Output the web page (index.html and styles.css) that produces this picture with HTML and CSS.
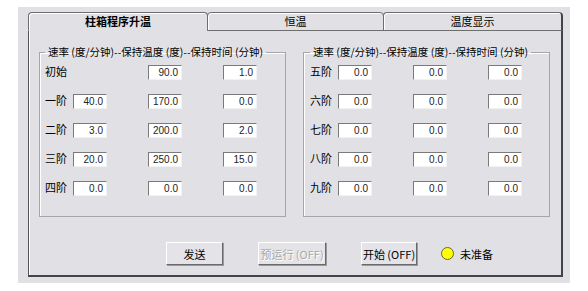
FILE: index.html
```html
<!DOCTYPE html>
<html>
<head>
    <title>柱箱程序升温</title>
    <link rel="stylesheet" href="styles.css">
</head>

<body>
    <div class="window">
        <div class="tabs">
            <div class="tab active">柱箱程序升温</div>
            <div class="tab">恒温</div>
            <div class="tab last">温度显示</div>
        </div>
        <div class="panel">
            <div class="groups">
                <fieldset class="group">
                    <legend>速率 (度/分钟)--保持温度 (度)--保持时间 (分钟)</legend>
                    <div class="rows">
                        <span class="label">初始</span><span></span>
                        <input type="text" class="num" value="90.0">
                        <input type="text" class="num" value="1.0">

                        <span class="label">一阶</span>
                        <input type="text" class="num" value="40.0">
                        <input type="text" class="num" value="170.0">
                        <input type="text" class="num" value="0.0">

                        <span class="label">二阶</span>
                        <input type="text" class="num" value="3.0">
                        <input type="text" class="num" value="200.0">
                        <input type="text" class="num" value="2.0">

                        <span class="label">三阶</span>
                        <input type="text" class="num" value="20.0">
                        <input type="text" class="num" value="250.0">
                        <input type="text" class="num" value="15.0">

                        <span class="label">四阶</span>
                        <input type="text" class="num" value="0.0">
                        <input type="text" class="num" value="0.0">
                        <input type="text" class="num" value="0.0">
                    </div>
                </fieldset>
                <fieldset class="group">
                    <legend>速率 (度/分钟)--保持温度 (度)--保持时间 (分钟)</legend>
                    <div class="rows">
                        <span class="label">五阶</span>
                        <input type="text" class="num" value="0.0">
                        <input type="text" class="num" value="0.0">
                        <input type="text" class="num" value="0.0">

                        <span class="label">六阶</span>
                        <input type="text" class="num" value="0.0">
                        <input type="text" class="num" value="0.0">
                        <input type="text" class="num" value="0.0">

                        <span class="label">七阶</span>
                        <input type="text" class="num" value="0.0">
                        <input type="text" class="num" value="0.0">
                        <input type="text" class="num" value="0.0">

                        <span class="label">八阶</span>
                        <input type="text" class="num" value="0.0">
                        <input type="text" class="num" value="0.0">
                        <input type="text" class="num" value="0.0">

                        <span class="label">九阶</span>
                        <input type="text" class="num" value="0.0">
                        <input type="text" class="num" value="0.0">
                        <input type="text" class="num" value="0.0">
                    </div>
                </fieldset>
            </div>
            <div class="actions">
                <button type="button" class="btn send">发送</button>
                <button type="button" class="btn pre" disabled>预运行 (OFF)</button>
                <button type="button" class="btn start">开始 (OFF)</button>
                <span class="lamp"></span>
                <span class="status">未准备</span>
            </div>
        </div>
    </div>
</body>
</html>
```

FILE: styles.css
```css
body {
    margin: 0;
    padding: 0;
    background-color: #ffffff;
    font-family: "Noto Sans CJK SC", "DejaVu Sans", sans-serif;
    font-size: 11px;
    color: #000;
}
.window {
    box-sizing: border-box;
    width: 552px;
    height: 276px;
    margin: 7px 0 0 18px;
    padding: 5px 7px 6px 10px;
    background-color: #e1e1e5;
}
.tabs {
    display: flex;
    height: 19px;
}
.tab {
    box-sizing: border-box;
    height: 19px;
    line-height: 16px;
    text-align: center;
    border: 1px solid #6e6e6e;
    border-radius: 4px 4px 0 0;
    box-shadow: inset 1px 1px 0 #ffffff;
    width: 177px;
    margin-left: -1px;
}
.tab:first-child {
    margin-left: 0;
    width: 180px;
}
.tab.active {
    font-weight: bold;
    border-bottom-color: #e1e1e5;
}
.tab.last {
    width: 180px;
    border-right: 2px solid #444;
}
.panel {
    box-sizing: border-box;
    width: 535px;
    height: 246px;
    border-left: 1px solid #555;
    border-right: 2px solid #444;
    border-bottom: 2px solid #444;
    box-shadow: inset 1px 0 0 #ffffff;
    padding: 15px 0 0 10px;
}
.groups {
    display: flex;
    gap: 17px;
}
.group {
    box-sizing: border-box;
    width: 247px;
    margin: 0;
    padding: 7px 6px 20px 5px;
    border: 1px solid #a6a6aa;
    box-shadow: inset 1px 1px 0 #fff;
    min-width: 0;
}
.group + .group {
    padding-left: 6px;
}
.group legend {
    margin-left: 0;
    padding: 0 3px;
    line-height: 12px;
    font-size: 10.5px;
    white-space: nowrap;
}
.rows {
    display: grid;
    grid-template-columns: 28px 34px 75px 75px;
    grid-auto-rows: 15px;
    row-gap: 14px;
}
.label {
    line-height: 12px;
}
.num {
    box-sizing: border-box;
    width: 34px;
    height: 15px;
    margin: 0;
    padding: 0 3px 0 0;
    background-color: #fff;
    border: 1px solid;
    border-color: #7a7a7a #f2f2f2 #f2f2f2 #7a7a7a;
    font-family: "Liberation Sans", Arial, sans-serif;
    font-size: 10px;
    text-align: right;
    color: #222;
    justify-self: end;
}
.actions {
    display: flex;
    align-items: center;
    margin-top: 25px;
    padding-left: 127px;
}
.btn {
    box-sizing: border-box;
    height: 23px;
    margin: 0 35px 0 0;
    padding: 0;
    background-color: #e4e4e8;
    border: 1px solid;
    border-color: #ffffff #6a6a6a #6a6a6a #ffffff;
    box-shadow: 1px 1px 0 #9a9a9a;
    font-family: "Noto Sans CJK SC", "DejaVu Sans", sans-serif;
    font-size: 11px;
    color: #000;
}
.btn.send {
    width: 57px;
}
.btn.pre {
    width: 68px;
    color: #a8a8a8;
    text-shadow: 1px 1px 0 #fff;
}
.btn.start {
    width: 56px;
    margin-right: 24px;
}
.lamp {
    width: 11px;
    height: 11px;
    border-radius: 50%;
    background-color: #ffff00;
    border: 1px solid #6a6a20;
}
.status {
    margin-left: 6px;
}
```
